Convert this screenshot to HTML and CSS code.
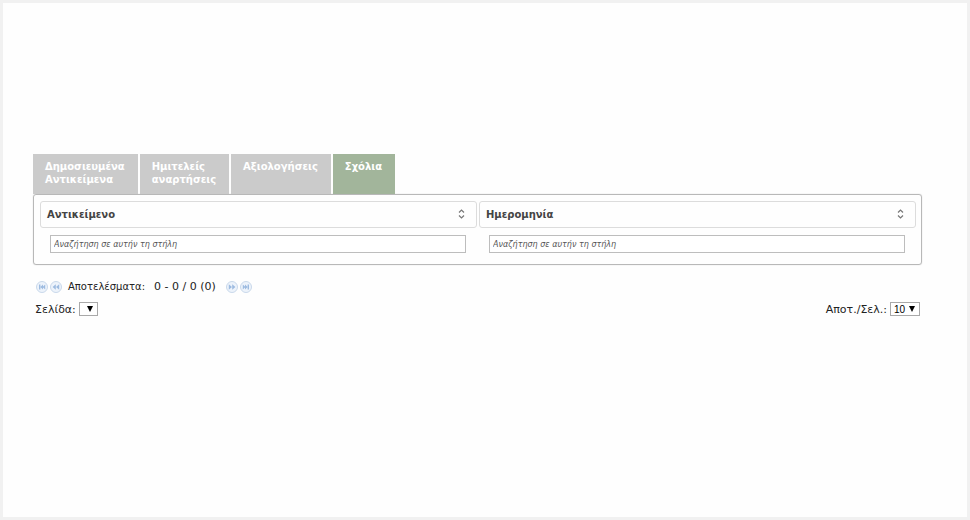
FILE: index.html
```html
<!DOCTYPE html>
<html lang="el">
<head>
  <meta charset="UTF-8">
  <meta name="viewport" content="width=device-width, initial-scale=1.0">
  <title>Σχόλια</title>
  <link rel="stylesheet" href="styles.css">
</head>
<body>
  <main class="content">
    <!-- Tabs -->
    <nav class="tabs">
      <a href="#published">Δημοσιευμένα<br>Αντικείμενα</a>
      <a href="#drafts">Ημιτελείς<br>αναρτήσεις</a>
      <a href="#ratings">Αξιολογήσεις</a>
      <a href="#comments" class="active">Σχόλια</a>
    </nav>

    <!-- Comments table -->
    <div class="panel">
      <table class="grid">
        <thead>
          <tr>
            <th scope="col">
              <button type="button" class="sort">Αντικείμενο
                <svg width="7" height="10" viewBox="0 0 7 10"><path d="M1 3.5L3.5 1L6 3.5M1 6.5L3.5 9L6 6.5"/></svg>
              </button>
            </th>
            <th scope="col">
              <button type="button" class="sort">Ημερομηνία
                <svg width="7" height="10" viewBox="0 0 7 10"><path d="M1 3.5L3.5 1L6 3.5M1 6.5L3.5 9L6 6.5"/></svg>
              </button>
            </th>
          </tr>
        </thead>
        <tbody>
          <tr>
            <td><input type="text" class="filter" aria-label="Αντικείμενο" placeholder="Αναζήτηση σε αυτήν τη στήλη"></td>
            <td><input type="text" class="filter" aria-label="Ημερομηνία" placeholder="Αναζήτηση σε αυτήν τη στήλη"></td>
          </tr>
        </tbody>
      </table>
    </div>

    <!-- Pager -->
    <div class="pager">
      <button type="button" class="page-btn" aria-label="Πρώτη">
        <svg width="12" height="12" viewBox="0 0 12 12"><circle cx="6" cy="6" r="5.5"/><path d="M3 3.5h1.4v5H3zM7 3.5v5L4.4 6zM9.2 3.5v5L6.6 6z"/></svg>
      </button>
      <button type="button" class="page-btn" aria-label="Προηγούμενη">
        <svg width="12" height="12" viewBox="0 0 12 12"><circle cx="6" cy="6" r="5.5"/><path d="M5.8 3.3v5.4L2.6 6zM9.2 3.3v5.4L6 6z"/></svg>
      </button>
      <span class="results">Αποτελέσματα:</span>
      <span class="count">0 - 0 / 0 (0)</span>
      <button type="button" class="page-btn" aria-label="Επόμενη">
        <svg width="12" height="12" viewBox="0 0 12 12"><circle cx="6" cy="6" r="5.5"/><path d="M2.8 3.3v5.4L6 6zM6.2 3.3v5.4L9.4 6z"/></svg>
      </button>
      <button type="button" class="page-btn" aria-label="Τελευταία">
        <svg width="12" height="12" viewBox="0 0 12 12"><circle cx="6" cy="6" r="5.5"/><path d="M2.8 3.5v5L5.4 6zM5 3.5v5L7.6 6zM7.6 3.5H9v5H7.6z"/></svg>
      </button>
    </div>

    <div class="page-options">
      <div class="option">
        <label for="page">Σελίδα:</label>
        <select id="page" class="empty"></select>
      </div>
      <div class="option">
        <label for="perPage">Αποτ./Σελ.:</label>
        <select id="perPage">
          <option>10</option>
        </select>
      </div>
    </div>
  </main>
</body>
</html>
```
FILE: styles.css
```css
* {
  box-sizing: border-box;
}

body {
  margin: 0;
  min-height: 100vh;
  padding: 151px 45px 40px 30px;
  border: 3px solid #f1f1f1;
  background: #fefefe;
  font-family: "DejaVu Sans", Verdana, sans-serif;
  font-size: 10px;
  color: #222;
}

button,
input,
select {
  font-family: inherit;
}

/* Tabs */
.tabs {
  display: flex;
  gap: 2px;
}

.tabs a {
  min-height: 40px;
  padding: 6px 13px 8px 12px;
  background: #cbcbcb;
  color: #fff;
  font-weight: bold;
  line-height: 13px;
  text-decoration: none;
}

.tabs a.active {
  background: #a2b59b;
}

/* Table */
.panel {
  padding: 6px 3px 11px 4px;
  border: 1px solid #b8b8b8;
  border-radius: 3px;
  box-shadow: 0 0 1px #bbb;
}

.grid {
  width: 100%;
  table-layout: fixed;
  border-collapse: separate;
  border-spacing: 2px 0;
}

.grid th {
  padding: 0;
}

.grid td {
  padding: 7px 11px 0 10px;
}

.sort {
  display: flex;
  justify-content: space-between;
  align-items: center;
  width: 100%;
  height: 27px;
  padding: 0 11px 1px 6px;
  border: 1px solid #dcdcdc;
  border-radius: 3px;
  background: #fefefe;
  color: #444;
  font-size: 10px;
  font-weight: bold;
  cursor: pointer;
}

.sort svg {
  fill: none;
  stroke: #777;
  stroke-width: 1.2;
}

.filter {
  display: block;
  width: 100%;
  height: 18px;
  padding: 0 3px;
  border: 1px solid #bdbdbd;
  background: #fff;
  font-size: 8px;
  font-style: italic;
}

.filter::placeholder {
  color: #555;
  opacity: 1;
}

/* Pager */
.pager {
  display: flex;
  align-items: center;
  gap: 2px;
  padding: 15px 3px 0;
}

.page-btn {
  display: flex;
  padding: 0;
  border: 0;
  background: none;
  cursor: pointer;
}

.page-btn svg {
  fill: #9dbbe0;
}

.page-btn circle {
  fill: #edf3fb;
  stroke: #c9d8ea;
}

.results {
  margin: 0 7px 0 4px;
}

.count {
  margin-right: 8px;
  font-size: 11px;
}

.page-options {
  display: flex;
  justify-content: space-between;
  padding: 9px 2px 0;
  font-size: 11px;
}

.option {
  display: flex;
  align-items: center;
  gap: 3px;
}

.option select {
  appearance: none;
  width: 30px;
  height: 14px;
  padding: 0 0 0 3px;
  border: 1px solid #a9a9a9;
  border-radius: 0;
  background: #fff url("data:image/svg+xml,%3Csvg xmlns='http://www.w3.org/2000/svg' width='6' height='6'%3E%3Cpath d='M0 0h6L3 6z'/%3E%3C/svg%3E") no-repeat right 4px center;
  font-family: "Liberation Sans", Arial, sans-serif;
  font-size: 10px;
  color: #000;
}

.option select.empty {
  width: 19px;
}
```
